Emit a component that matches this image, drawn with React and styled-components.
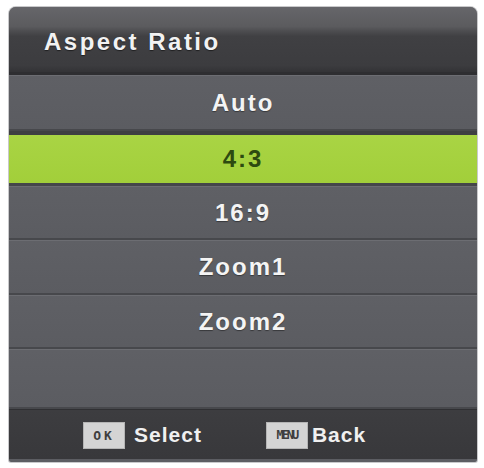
import React from "react";
import styled, { createGlobalStyle } from "styled-components";

const Global = createGlobalStyle`
  html, body { margin: 0; padding: 0; background: #ffffff; }
  body { width: 484px; height: 468px; overflow: hidden; font-family: "Liberation Sans", Arial, sans-serif; }
`;

const Page = styled.div`
  padding: 7px 7px 0 9px;
`;

const Panel = styled.div`
  width: 468px;
  height: 455px;
  display: flex;
  flex-direction: column;
  border-radius: 7px 7px 2px 2px;
  overflow: hidden;
  background: #5c5d62;
  box-shadow: 0 0 0 1px #c9c9cb;
`;

const Header = styled.div`
  height: 68px;
  flex: none;
  display: flex;
  align-items: center;
  padding: 4px 0 0 35px;
  box-sizing: border-box;
  background: linear-gradient(
    180deg,
    #66666a 0%,
    #5b5b5e 30%,
    #4d4d50 37%,
    #404043 45%,
    #3c3c3f 90%,
    #333336 100%
  );
  border-bottom: 3px solid #2e2e31;
`;

const Title = styled.div`
  color: #f2f2f2;
  font-weight: 700;
  font-size: 24px;
  letter-spacing: 2.5px;
  text-shadow: 0 1px 1px rgba(0, 0, 0, 0.5);
`;

const Row = styled.div`
  height: ${(p) => p.$h}px;
  flex: none;
  display: flex;
  align-items: center;
  justify-content: center;
  box-sizing: border-box;
  font-weight: 700;
  font-size: 24px;
  letter-spacing: 2px;
  color: ${(p) => (p.$active ? "#2d4a10" : "#f4f4f4")};
  background: ${(p) =>
    p.$active
      ? "linear-gradient(180deg, #a9d444 0%, #a2cf3a 100%)"
      : "linear-gradient(180deg, #5f6065 0%, #5b5c61 100%)"};
  border-top: ${(p) => (p.$active ? "4px solid #3e3f42" : "1px solid #6c6d72")};
  border-bottom: ${(p) => (p.$active ? "3px solid #45464a" : "2px solid #47484c")};
  text-shadow: ${(p) => (p.$active ? "none" : "0 1px 1px rgba(0,0,0,0.4)")};
`;

const Footer = styled.div`
  height: 50px;
  flex: none;
  display: flex;
  align-items: center;
  padding: 1px 0 0 74px;
  box-sizing: border-box;
  background: linear-gradient(180deg, #3d3d40 0%, #38383b 100%);
  border-top: 1px solid #303033;
`;

const Hint = styled.div`
  display: flex;
  align-items: center;
  gap: ${(p) => p.$gap}px;
  margin-right: ${(p) => p.$mr}px;
`;

const Key = styled.div`
  width: 42px;
  height: 27px;
  display: flex;
  align-items: center;
  justify-content: center;
  background: #d4d4d4;
  color: #3e3e3e;
  font-family: "DejaVu Sans Mono", monospace;
  font-weight: 700;
  font-size: ${(p) => p.$fs}px;
  letter-spacing: ${(p) => p.$ls}px;
  box-shadow: inset 0 0 0 1px #b5b5b5;
`;

const Label = styled.span`
  color: #f0f0f0;
  font-weight: 700;
  font-size: 21px;
  letter-spacing: 1px;
`;

const items = [
  { label: "Auto", h: 56 },
  { label: "4:3", h: 55, active: true },
  { label: "16:9", h: 54 },
  { label: "Zoom1", h: 55 },
  { label: "Zoom2", h: 54 },
];

export default function App() {
  return (
    <>
      <Global />
      <Page>
        <Panel>
          <Header>
            <Title>Aspect Ratio</Title>
          </Header>
          {items.map((it) => (
            <Row key={it.label} $h={it.h} $active={it.active}>
              {it.label}
            </Row>
          ))}
          <Row $h={60} />
          <Footer>
            <Hint $gap={9} $mr={64}>
              <Key $fs={13} $ls={3}>OK</Key>
              <Label>Select</Label>
            </Hint>
            <Hint $gap={4} $mr={0}>
              <Key $fs={12} $ls={-2}>MENU</Key>
              <Label>Back</Label>
            </Hint>
          </Footer>
        </Panel>
      </Page>
    </>
  );
}
